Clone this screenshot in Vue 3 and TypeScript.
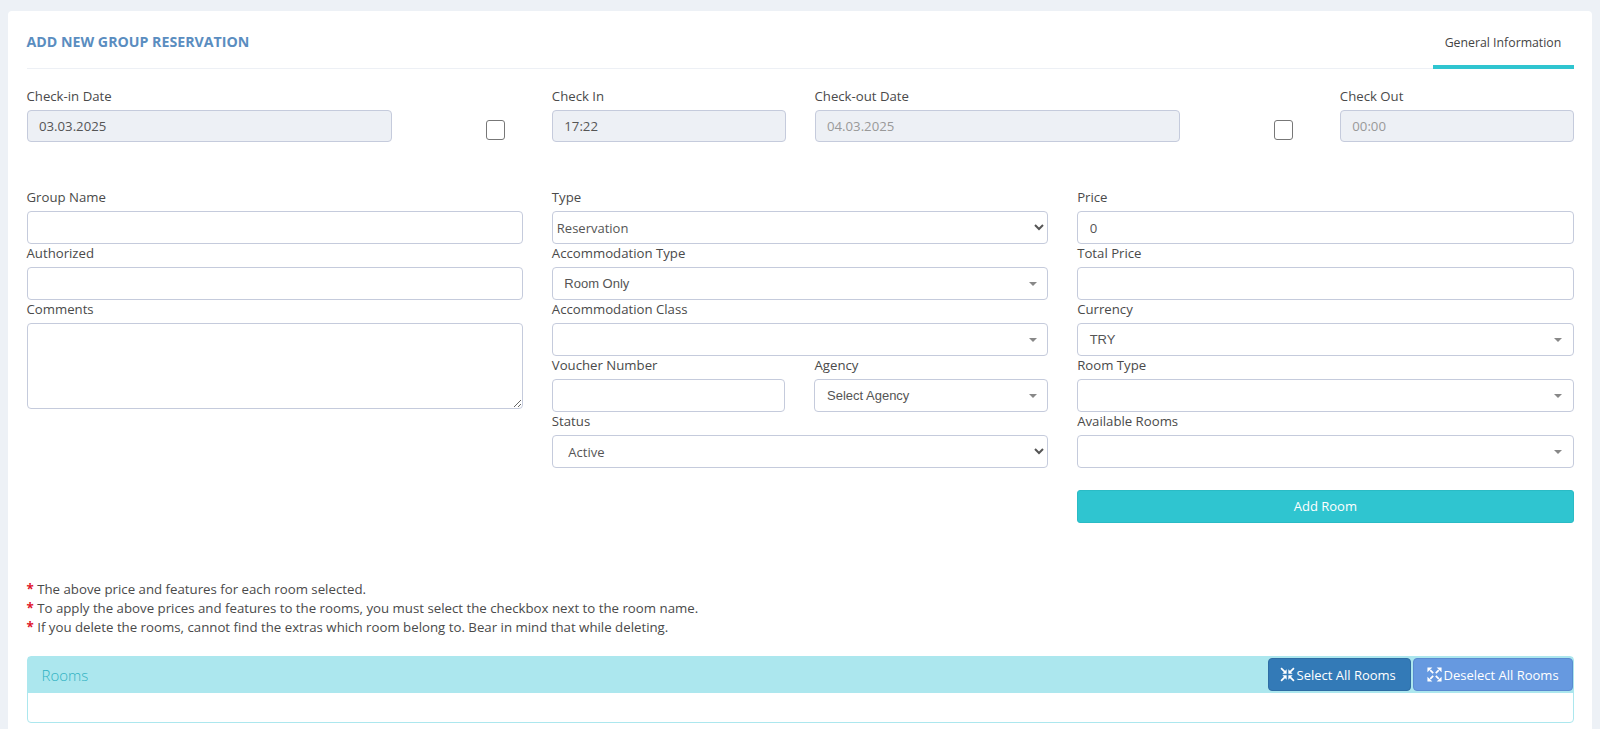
<script setup lang="ts">
const notes = [
  'The above price and features for each room selected.',
  'To apply the above prices and features to the rooms, you must select the checkbox next to the room name.',
  'If you delete the rooms, cannot find the extras which room belong to. Bear in mind that while deleting.',
]
</script>

<template>
  <div class="page">
    <div class="card">
      <div class="card-head">
        <h3 class="title">ADD NEW GROUP RESERVATION</h3>
        <a class="tab">General Information</a>
      </div>

      <div class="dates">
        <div class="span-3">
          <label>Check-in Date</label>
          <input class="field" type="text" value="03.03.2025" disabled />
        </div>
        <div class="span-1 check-cell"><span class="checkbox"></span></div>
        <div class="span-2">
          <label>Check In</label>
          <input class="field" type="text" value="17:22" disabled />
        </div>
        <div class="span-3">
          <label>Check-out Date</label>
          <input class="field muted" type="text" value="04.03.2025" disabled />
        </div>
        <div class="span-1 check-cell"><span class="checkbox"></span></div>
        <div class="span-2">
          <label>Check Out</label>
          <input class="field muted" type="text" value="00:00" disabled />
        </div>
      </div>

      <div class="form-cols">
        <div class="col">
          <label>Group Name</label>
          <input class="field" type="text" />
          <label>Authorized</label>
          <input class="field" type="text" />
          <label>Comments</label>
          <textarea class="field area"></textarea>
        </div>

        <div class="col">
          <label>Type</label>
          <select class="field native tight"><option>Reservation</option></select>
          <label>Accommodation Type</label>
          <div class="field pick"><span>Room Only</span><i class="caret"></i></div>
          <label>Accommodation Class</label>
          <div class="field pick"><span></span><i class="caret"></i></div>
          <div class="pair">
            <div>
              <label>Voucher Number</label>
              <input class="field" type="text" />
            </div>
            <div>
              <label>Agency</label>
              <div class="field pick"><span>Select Agency</span><i class="caret"></i></div>
            </div>
          </div>
          <label>Status</label>
          <select class="field native"><option>Active</option></select>
        </div>

        <div class="col">
          <label>Price</label>
          <input class="field" type="text" value="0" />
          <label>Total Price</label>
          <input class="field" type="text" />
          <label>Currency</label>
          <div class="field pick"><span>TRY</span><i class="caret"></i></div>
          <label>Room Type</label>
          <div class="field pick"><span></span><i class="caret"></i></div>
          <label>Available Rooms</label>
          <div class="field pick"><span></span><i class="caret"></i></div>
          <button class="add-room" type="button">Add Room</button>
        </div>
      </div>

      <ul class="notes">
        <li v-for="note in notes" :key="note"><b>*</b> {{ note }}</li>
      </ul>

      <div class="panel">
        <div class="panel-head">
          <span class="panel-title">Rooms</span>
          <div class="panel-btns">
            <button class="btn select" type="button">
              <svg viewBox="0 0 14 14" width="15" height="15" fill="currentColor" stroke="currentColor" stroke-width="1.6">
                <path d="M1 1l3.500 3.500M13 1L9.500 4.500M1 13l3.500-3.500M13 13L9.500 9.500" />
                <path stroke="none" d="M6.200 6.200V2.200L2.200 6.200zM7.800 6.200h4L7.800 2.200zM6.200 7.800h-4l4 4zM7.800 7.800v4l4-4z" />
              </svg>
              Select All Rooms
            </button>
            <button class="btn deselect" type="button">
              <svg viewBox="0 0 14 14" width="15" height="15" fill="currentColor" stroke="currentColor" stroke-width="1.6">
                <path d="M3 3l2.800 2.800M11 3L8.200 5.800M3 11l2.800-2.800M11 11L8.200 8.200" />
                <path stroke="none" d="M.4.400h4.600L.4 5zM13.600.400V5L9 .400zM.4 13.600V9l4.600 4.600zM13.600 13.600H9l4.600-4.600z" />
              </svg>
              Deselect All Rooms
            </button>
          </div>
        </div>
        <div class="panel-body"></div>
      </div>
    </div>
  </div>
</template>

<style scoped>
.page {
  height: 729px;
  overflow: hidden;
  box-sizing: border-box;
  padding: 11px 8px 0;
  background: #edf1f6;
  font-family: "Open Sans", sans-serif;
  font-size: 13.2px;
  color: #4a4a4a;
}
.card {
  background: #fff;
  border-radius: 4px;
  padding: 0 18.5px;
  min-height: 730px;
}
.card-head {
  display: flex;
  justify-content: space-between;
  height: 57px;
  border-bottom: 1px solid #edf0f5;
}
.title {
  margin: 20.5px 0 0;
  font-size: 14.2px;
  font-weight: 700;
  color: #5a8dc0;
}
.tab {
  box-sizing: border-box;
  width: 141px;
  height: 58px;
  padding-top: 23px;
  text-align: center;
  font-size: 12.3px;
  color: #444;
  border-bottom: 4px solid #2fc5d0;
}
label {
  display: block;
  height: 23px;
  line-height: 19px;
  color: #4a4a4a;
}
.dates {
  display: grid;
  grid-template-columns: repeat(12, 1fr);
  column-gap: 29px;
  margin-top: 18px;
}
.dates .field {
  height: 32px;
}
.span-1 { grid-column: span 1; }
.span-2 { grid-column: span 2; }
.span-3 { grid-column: span 3; }
.check-cell {
  display: flex;
  justify-content: flex-end;
  padding-top: 33px;
  padding-right: 17.5px;
}
.checkbox {
  box-sizing: border-box;
  width: 19.5px;
  height: 19.5px;
  border: 1.5px solid #777;
  border-radius: 3px;
  background: #fff;
}
.field {
  display: block;
  box-sizing: border-box;
  width: 100%;
  height: 33px;
  padding: 0 11.5px;
  border: 1px solid #c5cbdc;
  border-radius: 4px;
  background: #fff;
  font-family: inherit;
  font-size: 13.2px;
  color: #555;
  outline: none;
}
.field:disabled {
  background: #edf0f5;
  -webkit-text-fill-color: #555;
  opacity: 1;
}
.field.muted:disabled {
  -webkit-text-fill-color: #999;
}
.area {
  height: 86px;
  resize: vertical;
}
.form-cols {
  display: grid;
  grid-template-columns: repeat(3, 1fr);
  column-gap: 29px;
  margin-top: 46px;
}
.native {
  font-size: 13px;
}
.native.tight {
  padding: 0;
}
.pick {
  display: flex;
  align-items: center;
  justify-content: space-between;
  font-family: "Liberation Sans", Arial, sans-serif;
  font-size: 13px;
  color: #555;
}
.caret {
  width: 0;
  height: 0;
  margin-right: -1px;
  border-left: 4px solid transparent;
  border-right: 4px solid transparent;
  border-top: 4px solid #888;
}
.pair {
  display: grid;
  grid-template-columns: 1fr 1fr;
  column-gap: 29px;
}
.add-room {
  display: block;
  width: 100%;
  height: 33.5px;
  margin-top: 21.5px;
  border: 1px solid #2abbc5;
  border-radius: 3px;
  background: #2fc5d0;
  color: #fff;
  font-family: inherit;
  font-size: 13px;
  font-weight: 400;
}
.notes {
  list-style: none;
  margin: 56.5px 0 0;
  padding: 0;
  line-height: 19px;
  font-size: 13.26px;
}
.notes b {
  color: #e0172c;
}
.panel {
  margin-top: 19px;
  border: 1px solid #ace7ee;
  border-radius: 4px;
}
.panel-head {
  display: flex;
  align-items: center;
  justify-content: space-between;
  height: 36px;
  background: #ace7ee;
}
.panel-title {
  padding-left: 14px;
  font-size: 15px;
  font-weight: 300;
  color: #2fb2c2;
}
.panel-btns {
  display: flex;
  gap: 2px;
}
.btn {
  display: flex;
  align-items: center;
  gap: 2px;
  box-sizing: border-box;
  height: 32.5px;
  border-radius: 4px;
  color: #fff;
  font-family: inherit;
  font-size: 13px;
}
.btn.select {
  width: 143px;
  padding: 0 0 0 11px;
  background: #337ab7;
  border: 1px solid #2e6da4;
}
.btn.deselect {
  width: 160px;
  padding: 0 0 0 13px;
  background: #6699e0;
  border: 1px solid #5a8ad0;
}
.panel-body {
  height: 29px;
}
</style>
